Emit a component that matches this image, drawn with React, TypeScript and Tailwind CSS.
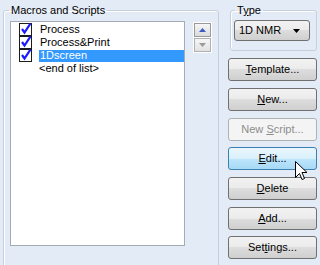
import React from "react";

const font = { fontFamily: '"Liberation Sans", Arial, sans-serif' };

function Check() {
  return (
    <svg width="13" height="13" viewBox="0 0 13 13" className="shrink-0">
      <rect x="0.5" y="0.5" width="12" height="12" fill="#fff" stroke="#1c1c1c" />
      <path d="M3 6 L5.5 9.5 L11.5 0.5" fill="none" stroke="#1a1aff" strokeWidth="2.2" />
    </svg>
  );
}

function Btn({ children, hot, disabled }: { children: React.ReactNode; hot?: boolean; disabled?: boolean }) {
  const cls = disabled
    ? "border-[#adb2b5] bg-[#f4f4f4] text-[#8d8d8d]"
    : hot
    ? "border-[#3c7fb1] bg-[linear-gradient(#eaf6fd_0%,#d9f0fc_50%,#bee6fd_50%,#a7d9f5_100%)] text-black"
    : "border-[#707070] bg-[linear-gradient(#f2f2f2_0%,#ebebeb_50%,#dddddd_50%,#cfcfcf_100%)] text-black";
  return (
    <div className={`h-[23px] w-[89px] rounded-[3px] border flex items-center justify-center text-[11px] ${cls}`}>
      <span>{children}</span>
    </div>
  );
}

export default function App() {
  return (
    <div className="w-[320px] h-[265px] overflow-hidden bg-[#e3ebf6] flex relative text-[11px] leading-[13px] text-black" style={font}>
      <fieldset className="ml-[3px] mt-[4px] w-[216px] h-[300px] border border-[#c5d0dc] rounded-[3px] shadow-[inset_1px_1px_0_#fff] p-0">
        <legend className="ml-[5px] px-[2px] leading-[13px]">Macros and Scripts</legend>
        <div className="flex items-start pl-[6px] pt-[4px]">
          <div className="w-[175px] h-[225px] bg-white border border-[#a5acb5] pt-[1px]">
            <div className="h-[13px] flex items-center pl-[8px]">
              <Check />
              <span className="ml-[7px] px-[1px]">Process</span>
            </div>
            <div className="h-[13px] flex items-center pl-[8px]">
              <Check />
              <span className="ml-[7px] px-[1px]">Process&amp;Print</span>
            </div>
            <div className="h-[13px] flex items-center pl-[8px]">
              <Check />
              <span className="ml-[7px] px-[1px] flex-1 h-[12px] flex items-center bg-[#3399ff] text-white">1Dscreen</span>
            </div>
            <div className="h-[13px] flex items-center pl-[27px]">
              <span className="px-[1px]">&lt;end of list&gt;</span>
            </div>
          </div>
          <div className="ml-[8px] mt-[1px] w-[19px] bg-white p-[1px] flex flex-col gap-[1px]">
            <div className="h-[14px] border border-[#9a9a9a] bg-[linear-gradient(#f6f6f6,#dcdcdc)] flex items-center justify-center">
              <svg width="7" height="4" viewBox="0 0 7 4"><path d="M3.5 0 L7 4 L0 4 Z" fill="#3c5cc4" /></svg>
            </div>
            <div className="h-[14px] border border-[#b0b0b0] bg-[linear-gradient(#f6f6f6,#e2e2e2)] flex items-center justify-center">
              <svg width="7" height="4" viewBox="0 0 7 4"><path d="M0 0 L7 0 L3.5 4 Z" fill="#9a9a9a" /></svg>
            </div>
          </div>
        </div>
      </fieldset>
      <div className="ml-[9px] w-[89px] flex flex-col">
        <fieldset className="ml-[2px] mt-[4px] w-[87px] border border-[#c5d0dc] rounded-[3px] shadow-[inset_1px_1px_0_#fff] p-0">
          <legend className="ml-[4px] px-[2px] leading-[13px]">
            T<span className="underline">y</span>pe
          </legend>
          <div className="pl-[3px] pt-[3px] pb-[9px]">
            <div className="w-[76px] h-[21px] rounded-[3px] border border-[#707070] bg-[linear-gradient(#f2f2f2_0%,#ebebeb_50%,#dddddd_50%,#cfcfcf_100%)] flex items-center pl-[4px] pr-[9px] justify-between">
              <span>1D NMR</span>
              <svg width="7" height="4" viewBox="0 0 7 4"><path d="M0 0 L7 0 L3.5 4 Z" fill="#000" /></svg>
            </div>
          </div>
        </fieldset>
        <div className="mt-[7px]">
          <Btn><span className="underline">T</span>emplate...</Btn>
        </div>
        <div className="mt-[7px]">
          <Btn><span className="underline">N</span>ew...</Btn>
        </div>
        <div className="mt-[7px]">
          <Btn disabled>New <span className="underline">S</span>cript...</Btn>
        </div>
        <div className="mt-[6px]">
          <Btn hot><span className="underline">E</span>dit...</Btn>
        </div>
        <div className="mt-[7px]">
          <Btn><span className="underline">D</span>elete</Btn>
        </div>
        <div className="mt-[7px]">
          <Btn><span className="underline">A</span>dd...</Btn>
        </div>
        <div className="mt-[6px]">
          <Btn>Set<span className="underline">t</span>ings...</Btn>
        </div>
      </div>
      <svg className="absolute left-[295px] top-[161px]" width="13" height="20" viewBox="0 0 13 20">
        <path d="M0.5 0.5 L0.5 16.5 L4.5 12.5 L7 18.5 L9.5 17.5 L7 11.5 L12 11.5 Z" fill="#fff" stroke="#000" strokeLinejoin="miter" />
      </svg>
    </div>
  );
}
